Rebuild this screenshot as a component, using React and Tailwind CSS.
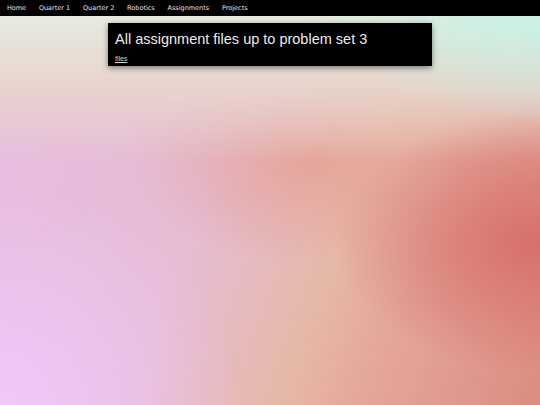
import React from 'react'

const NAV = ['Home', 'Quarter 1', 'Quarter 2', 'Robotics', 'Assignments', 'Projects']

export default function App(){
  return (
    <div className="min-h-[405px] w-full flex flex-col bg-[#e6b8c4] [background-image:radial-gradient(ellipse_38%_32%_at_100%_60%,#d6706a_0%,rgba(214,112,106,0.55)_45%,rgba(214,112,106,0)_100%),radial-gradient(ellipse_45%_55%_at_0%_100%,#f0c8fa_0%,rgba(240,200,250,0)_100%),radial-gradient(ellipse_40%_30%_at_100%_0%,#c2f2e4_0%,rgba(194,242,228,0)_100%),linear-gradient(to_bottom,#e6f0e4_0%,rgba(232,214,204,0.9)_22%,rgba(232,200,200,0)_40%),radial-gradient(ellipse_35%_25%_at_58%_40%,rgba(228,160,148,0.8)_0%,rgba(228,160,148,0)_100%),linear-gradient(110deg,#e8bce2_0%,#e6bcd4_40%,#e6b8a8_62%,#e4a498_76%,#dc8c80_100%)]">
      <nav className="h-4 bg-black flex items-center pl-[0.5px] font-['DejaVu_Sans',sans-serif] text-[6.5px] text-[#e4e4e4] antialiased">
        {NAV.map(n=> <a key={n} className="px-[6.4px] leading-4">{n}</a>)}
      </nav>
      <div className="flex justify-center pt-[7px]">
        <div className="w-[324px] bg-black shadow-[0_2px_6px_rgba(0,0,0,0.45)] px-[7px] pt-[8px] pb-[3px] font-['Liberation_Sans',Arial,sans-serif] antialiased">
          <h1 className="text-[14.5px] leading-4 text-[#ececec]">All assignment files up to problem set 3</h1>
          <a className="block mt-[7px] text-[7px] leading-[9px] text-[#cfcfcf] underline">files</a>
        </div>
      </div>
    </div>
  )
}
